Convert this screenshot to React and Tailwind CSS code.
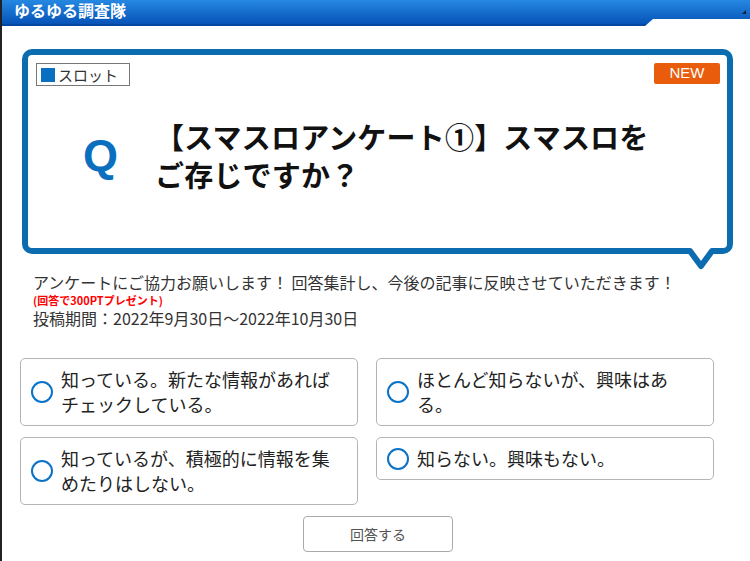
const options = [
  ["知っている。新たな情報があれば", "チェックしている。"],
  ["ほとんど知らないが、興味はあ", "る。"],
  ["知っているが、積極的に情報を集", "めたりはしない。"],
  ["知らない。興味もない。"],
];

const jp = "font-['Noto_Sans_CJK_JP','Noto_Sans',sans-serif]";

function Option({ lines }) {
  return (
    <label className="flex items-center rounded-[5px] border border-[#b4b4b4] bg-white py-[8px] pl-[10px] pr-[20px] cursor-pointer">
      <span className="mr-[8px] h-[22px] w-[22px] shrink-0 rounded-full border-[2.5px] border-[#0b72c6]" />
      <span className="text-[18px] leading-[25px] text-[#222]">
        {lines.map((l, i) => (
          <span key={i} className="block whitespace-nowrap">
            {l}
          </span>
        ))}
      </span>
    </label>
  );
}

export default function App() {
  return (
    <div className={`min-h-[561px] w-[750px] border-l-2 border-[#222] bg-white ${jp}`}>
      <header className="flex h-[26px] items-start justify-between border-b-2 border-[#0447a3] bg-gradient-to-b from-[#2688e2] to-[#0753b7] pl-3 pr-[4px] [clip-path:polygon(0_0,100%_0,100%_19px,651px_19px,643px_26px,0_26px)]">
        <span className="text-[16px] font-bold leading-[20px] text-white">
          ゆるゆる調査隊
        </span>
        <span className="mt-[10px] h-0 w-0 border-b-[4px] border-l-[4px] border-b-[#123] border-l-transparent" />
      </header>

      <section className="relative ml-[20px] mt-[23px] h-[205px] w-[711px] rounded-[10px] border-[6px] border-[#0b6db0] bg-white">
        <div className="flex items-start justify-between pl-[8px] pr-[7px] pt-[8px]">
          <span className="flex h-[23px] w-[94px] items-center border border-[#777] pl-[4px] text-[15px] leading-none text-[#333]">
            <span className="mr-[3px] h-[14px] w-[14px] bg-[#0a6fc0]" />
            スロット
          </span>
          <span className="flex h-[21px] w-[66px] items-center justify-center rounded-[2px] bg-[#e85c0c] font-['Liberation_Sans',sans-serif] text-[15px] text-white">
            NEW
          </span>
        </div>
        <div className="mt-[31px] flex items-center">
          <span className="ml-[55px] w-[72px] font-['Liberation_Sans',sans-serif] text-[45px] font-bold leading-none text-[#0b6fc0]">
            Q
          </span>
          <h1 className="text-[29px] font-bold leading-[38px] tracking-[0.2px] text-[#111]">
            【スマスロアンケート①】スマスロを
            <br />
            ご存じですか？
          </h1>
        </div>
        <svg
          className="absolute bottom-[-24px] left-[655px]"
          width="36"
          height="28"
          viewBox="0 0 36 28"
        >
          <polygon points="4,2 32,2 18,22" fill="#fff" />
          <polyline
            points="0,7 7,7 18,22 29,7 36,7"
            fill="none"
            stroke="#0b6db0"
            strokeWidth="6"
            strokeLinejoin="round"
          />
        </svg>
      </section>

      <div className="ml-[31px] mt-[18px] text-[#333]">
        <p className="text-[16px] leading-[20px]">
          アンケートにご協力お願いします！ 回答集計し、今後の記事に反映させていただきます！
        </p>
        <p className="py-[1px] text-[11px] font-bold leading-[14px] text-[#f00]">
          (回答で300PTプレゼント)
        </p>
        <p className="text-[16px] leading-[21px]">
          投稿期間：2022年9月30日～2022年10月30日
        </p>
      </div>

      <div className="ml-[18px] mt-[29px] grid grid-cols-[338px_338px] items-start gap-x-[18px] gap-y-[11px]">
        {options.map((o, i) => (
          <Option key={i} lines={o} />
        ))}
      </div>

      <button className="ml-[301px] mt-[11px] h-[36px] w-[150px] rounded-[4px] border border-[#aaa] bg-white text-[14px] text-[#555]">
        回答する
      </button>
    </div>
  );
}
